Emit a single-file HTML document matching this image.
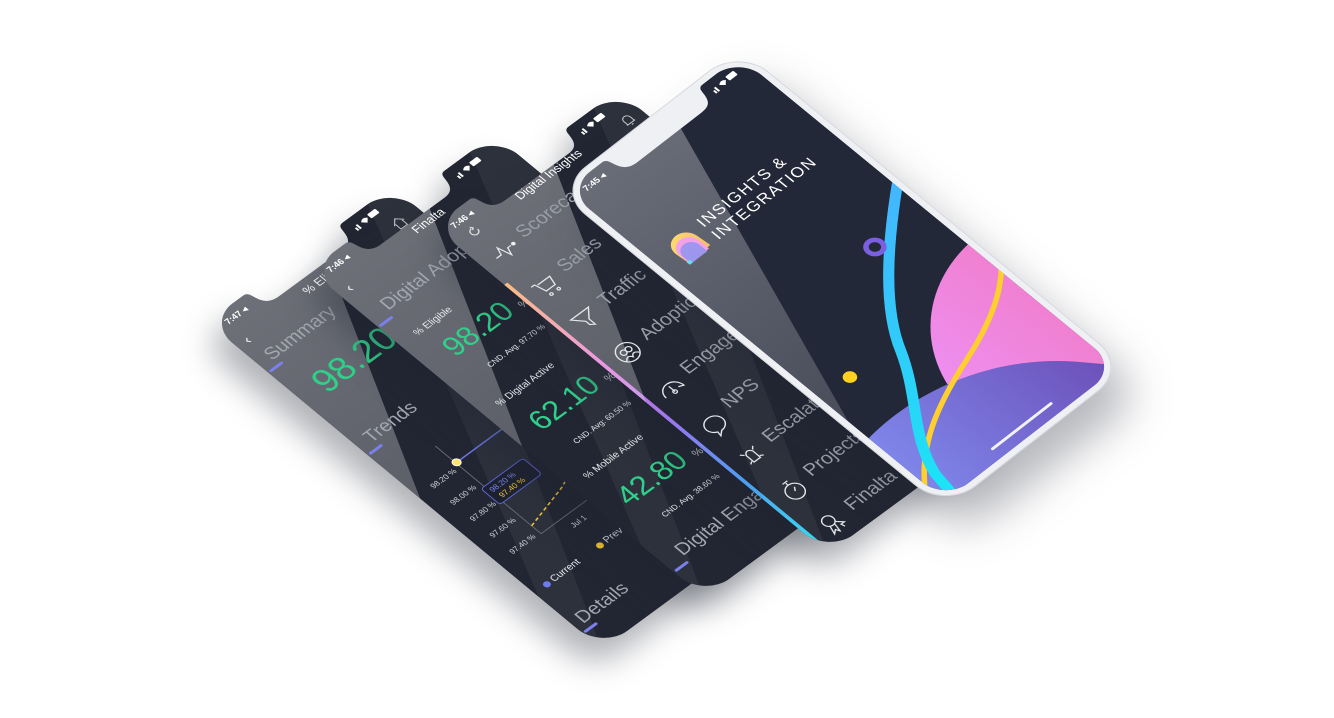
<!DOCTYPE html>
<html><head><meta charset="utf-8">
<style>
html,body{margin:0;padding:0;background:#fff;width:1334px;height:718px;overflow:hidden;font-family:"Liberation Sans",sans-serif}
.sw{position:absolute;left:0;top:0;width:1334px;height:718px}
.ph{position:absolute;left:0;top:0;width:230px;height:500px;transform-origin:0 0;background:#222632;overflow:hidden;
clip-path:path('M 32 0 L 44 0 C 50 0 50 4 51 8 C 53 18 58 22 68 22 L 146 22 C 156 22 160 18 162 8 C 163 4 163 0 169 0 L 198 0 A 32 32 0 0 1 230 32 L 230 468 A 32 32 0 0 1 198 500 L 32 500 A 32 32 0 0 1 0 468 L 0 32 A 32 32 0 0 1 32 0 Z')}
.ph *{position:absolute;white-space:nowrap}
.gl{left:0;top:0;width:230px;height:500px;background:linear-gradient(180deg,rgba(255,255,255,.34),rgba(255,255,255,.2));clip-path:polygon(0 0,140px 0,0 270px)}
.gl2{left:0;top:0;width:230px;height:500px;background:rgba(255,255,255,.05);clip-path:polygon(200px 0,230px 0,230px 60px,0 500px,0 420px)}
.t{color:#fff;font-size:9px;font-weight:bold}
.ti{color:#fff;font-size:12px}
.tab{color:#a3a7b0;font-size:19px}
.ind{width:16px;height:3px;background:#7c80ee;border-radius:2px}
.g{color:#2fd08a;font-weight:normal}
.s{color:#e6e8ec;font-size:9px}
.m{color:#9a9ea8;font-size:19px}
.sig{width:30px;height:10px}
</style></head><body>

<!-- phone 4 -->
<div class="sw" style="filter:drop-shadow(-8px 22px 16px rgba(30,35,50,.35))">
<div class="ph" style="transform:matrix(0.804,-0.59,0.79,0.655,207,322)">
 <div class="gl"></div><div class="gl2"></div>
 <div class="t" style="left:12px;top:7px">7:47 ◂</div>
 <svg class="sig" style="left:172px;top:6px" viewBox="0 0 30 10"><rect x="0" y="6" width="2" height="4" fill="#fff"/><rect x="3" y="4" width="2" height="6" fill="#fff"/><path d="M9 5 Q13 1 17 5 L13 9Z" fill="#fff"/><rect x="19" y="2" width="10" height="6" rx="1" fill="#fff"/></svg>
 <svg style="left:198px;top:26px;width:16px;height:16px" viewBox="0 0 16 16"><path d="M2 8 L8 2 L14 8 M4 7 V14 H12 V7" stroke="#ccc" fill="none"/></svg>
 <div class="ti" style="left:10px;top:30px;font-size:14px">&lsaquo;</div>
 <div class="ti" style="left:88px;top:27px">% Eligible</div>
 <div class="tab" style="left:12px;top:54px">Summary</div>
 <div class="ind" style="left:2px;top:76px"></div>
 <div class="g" style="left:22px;top:97px;font-size:36px">98.20</div>
 <div class="tab" style="left:12px;top:180px">Trends</div>
 <div class="ind" style="left:2px;top:202px"></div>
 <svg style="left:0;top:220px;width:230px;height:170px" viewBox="0 220 230 170">
  <path d="M52 236 V370 H150" stroke="#666a73" fill="none"/>
  <path d="M53 262 H150" stroke="#6f78e8" stroke-width="1.5" fill="none"/>
  <path d="M52 358 L102 345 L140 330" stroke="#f2c531" stroke-width="1.5" stroke-dasharray="4 3" fill="none"/>
  <circle cx="53" cy="262" r="4" fill="#ffe46a" stroke="#fff"/>
  <rect x="48" y="298" width="52" height="24" rx="3" fill="#1e2230" stroke="#5f67d8"/>
  <text x="53" y="308" font-size="8" fill="#8188f0" font-family="Liberation Sans">98.20 %</text>
  <text x="55" y="318" font-size="8" fill="#f5c92c" font-family="Liberation Sans">97.40 %</text>
  <g font-size="8" fill="#cfd2d8" font-family="Liberation Sans" text-anchor="end">
  <text x="46" y="270">98.20 %</text><text x="46" y="295">98.00 %</text><text x="46" y="320">97.80 %</text><text x="46" y="345">97.60 %</text><text x="46" y="370">97.40 %</text></g>
  <text x="78" y="385" font-size="8" fill="#cfd2d8" font-family="Liberation Sans">Jul 1</text>
 </svg>
 <div style="left:12px;top:411px;width:7px;height:7px;border-radius:50%;background:#6f7cf0"></div>
 <div class="s" style="left:22px;top:409px;font-size:10px">Current</div>
 <div style="left:78px;top:411px;width:7px;height:7px;border-radius:50%;background:#f5c92c"></div>
 <div class="s" style="left:88px;top:409px;font-size:10px">Previous</div>
 <div class="tab" style="left:8px;top:452px">Details</div>
 <div class="ind" style="left:2px;top:474px"></div>
</div></div>

<!-- phone 3 -->
<div class="sw" style="filter:drop-shadow(-8px 22px 16px rgba(30,35,50,.35))">
<div class="ph" style="transform:matrix(0.804,-0.59,0.79,0.655,309,270)">
 <div class="gl"></div><div class="gl2"></div>
 <div class="t" style="left:12px;top:7px">7:46 ◂</div>
 <svg class="sig" style="left:172px;top:6px" viewBox="0 0 30 10"><rect x="0" y="6" width="2" height="4" fill="#fff"/><rect x="3" y="4" width="2" height="6" fill="#fff"/><path d="M9 5 Q13 1 17 5 L13 9Z" fill="#fff"/><rect x="19" y="2" width="10" height="6" rx="1" fill="#fff"/></svg>
 <div class="ti" style="left:10px;top:30px;font-size:14px">&lsaquo;</div>
 <div class="ti" style="left:100px;top:24px">Finalta</div>
 <div class="tab" style="left:20px;top:64px">Digital Adoption</div>
 <div class="ind" style="left:2px;top:86px"></div>
 <div class="s" style="left:19px;top:110px;font-size:10px">% Eligible</div>
 <div class="g" style="left:27px;top:132px;font-size:30px">98.20 <span style="position:static;font-size:11px;color:#ddd">%</span></div>
 <div class="s" style="left:42px;top:180px;font-size:8px">CND. Avg. 97.70 %</div>
 <div class="s" style="left:17px;top:216px;font-size:10px">% Digital Active</div>
 <div class="g" style="left:25px;top:243px;font-size:30px">62.10 <span style="position:static;font-size:11px;color:#ddd">%</span></div>
 <div class="s" style="left:38px;top:293px;font-size:8px">CND. Avg: 60.50 %</div>
 <div class="s" style="left:17px;top:327px;font-size:10px">% Mobile Active</div>
 <div class="g" style="left:23px;top:356px;font-size:30px">42.80 <span style="position:static;font-size:11px;color:#ddd">%</span></div>
 <div class="s" style="left:38px;top:405px;font-size:8px">CND. Avg. 38.60 %</div>
 <div class="tab" style="left:19px;top:438px">Digital Engagement</div>
 <div class="ind" style="left:2px;top:460px"></div>
</div></div>

<!-- phone 2 -->
<div class="sw" style="filter:drop-shadow(-8px 22px 16px rgba(30,35,50,.35))">
<div class="ph" style="transform:matrix(0.804,-0.59,0.79,0.655,433,226)">
 <div style="left:0;top:90px;width:4px;height:410px;background:linear-gradient(#f7a04b,#e46fd6 30%,#8b7cf0 55%,#4aa0f0 75%,#27e0f0)"></div>
 <div class="gl"></div><div class="gl2"></div>
 <div class="t" style="left:12px;top:7px">7:46 ◂</div>
 <svg class="sig" style="left:172px;top:6px" viewBox="0 0 30 10"><rect x="0" y="6" width="2" height="4" fill="#fff"/><rect x="3" y="4" width="2" height="6" fill="#fff"/><path d="M9 5 Q13 1 17 5 L13 9Z" fill="#fff"/><rect x="19" y="2" width="10" height="6" rx="1" fill="#fff"/></svg>
 <svg style="left:205px;top:22px;width:16px;height:16px" viewBox="0 0 16 16"><path d="M4 12 V7 A4 4 0 0 1 12 7 V12 H3 H13 M7 14 H9" stroke="#ccc" fill="none"/></svg>
 <svg style="left:16px;top:22px;width:14px;height:14px" viewBox="0 0 14 14"><path d="M11 7 A4 4 0 1 1 7 3 M7 1 L9 3 L7 5" stroke="#ddd" fill="none" stroke-width="1.3"/></svg>
 <div class="ti" style="left:78px;top:20px">Digital Insights</div>
 <div class="m" style="left:50px;top:48px">Scorecard</div>
 <div class="m" style="left:50px;top:100px">Sales</div>
 <div class="m" style="left:50px;top:152px">Traffic</div>
 <div class="m" style="left:50px;top:204px">Adoption</div>
 <div class="m" style="left:50px;top:256px">Engagement</div>
 <div class="m" style="left:50px;top:308px">NPS</div>
 <div class="m" style="left:50px;top:360px">Escalations</div>
 <div class="m" style="left:50px;top:412px">Projects</div>
 <div class="m" style="left:50px;top:464px">Finalta</div>
 <svg style="left:14px;top:50px;width:28px;height:440px" viewBox="0 0 28 440" fill="none" stroke="#e4e6ea" stroke-width="1.3">
  <path d="M2 14 H8 L11 6 L15 20 L18 12 H22"/><circle cx="25" cy="12" r="1.5" fill="#fff"/>
  <path d="M2 58 H6 L9 70 H20 L23 60 H8 M10 74 a1.5 1.5 0 1 0 .1 0 M19 74 a1.5 1.5 0 1 0 .1 0"/>
  <path d="M2 108 H24 L15 118 V126 L11 123 V118 Z"/>
  <circle cx="14" cy="168" r="11"/><circle cx="11" cy="166" r="3"/><circle cx="17" cy="166" r="3"/><path d="M6 175 Q11 169 14 175 Q17 169 22 175"/>
  <path d="M3 228 A11 11 0 1 1 25 228 L20 226 M14 220 L14 228"/><circle cx="14" cy="228" r="2"/>
  <path d="M4 278 A10 9 0 1 1 14 287 L9 291 L10 286 A10 9 0 0 1 4 278"/>
  <path d="M10 322 Q14 316 18 322 L18 332 L10 332 Z M6 318 L9 321 M22 318 L19 321 M6 332 L9 330 M22 332 L19 330"/>
  <circle cx="14" cy="380" r="9"/><path d="M14 371 V368 M11 367 H17 M14 380 L17 376"/>
  <circle cx="12" cy="424" r="6"/><path d="M9 429 L6 438 L10 435 L12 439 L14 430 M16 428 L22 434 L18 434 L19 438"/>
 </svg>
</div></div>

<!-- front phone -->
<div class="sw" style="filter:drop-shadow(18px 26px 22px rgba(30,35,50,.32))">
<div style="position:absolute;left:0;top:0;width:230px;height:500px;transform-origin:0 0;transform:matrix(0.80,-0.62,0.78,0.64,555,190);background:#eef0f3;border-radius:38px;box-shadow:inset 0 0 0 1px #d4d7dc">
 <div class="ph" style="left:7px;top:7px;width:216px;height:486px;background:#232838;clip-path:path('M 30 0 L 44 0 C 50 0 50 4 51 8 C 53 18 58 22 68 22 L 148 22 C 158 22 162 18 164 8 C 165 4 165 0 171 0 L 186 0 A 30 30 0 0 1 216 30 L 216 456 A 30 30 0 0 1 186 486 L 30 486 A 30 30 0 0 1 0 456 L 0 30 A 30 30 0 0 1 30 0 Z')">
  <svg style="left:-7px;top:-7px;width:230px;height:500px" viewBox="0 0 230 500">
   <defs>
    <linearGradient id="pk" x1="0" y1="0" x2="1" y2="0"><stop offset="0" stop-color="#ee8ff2"/><stop offset="1" stop-color="#f26ea8"/></linearGradient>
    <linearGradient id="pu" x1="0" y1="0" x2="1" y2="0"><stop offset="0" stop-color="#7f86ea"/><stop offset="1" stop-color="#6a4cb5"/></linearGradient>
    <linearGradient id="cy" x1="0" y1="0" x2="0" y2="1"><stop offset="0" stop-color="#45b4ff"/><stop offset="1" stop-color="#16e9f4"/></linearGradient>
    <linearGradient id="lg1" x1="0" y1="0" x2="1" y2="1"><stop offset="0" stop-color="#ffd23a"/><stop offset="1" stop-color="#f4a23a"/></linearGradient>
   </defs>
   <circle cx="238" cy="445" r="145" fill="url(#pk)"/>
   <path d="M0 396 C70 384 150 404 200 462 L240 510 L0 510Z" fill="url(#pu)"/>
   <path d="M245 318 C225 345 200 370 131 393 C80 410 30 432 -5 482" stroke="#ffcf2e" stroke-width="5" fill="none"/>
   <path d="M242 195 C170 250 118 300 96 345 C72 392 36 420 22 465 L14 512" stroke="url(#cy)" stroke-width="10" fill="none"/>
   <circle cx="161" cy="245" r="8" fill="none" stroke="#7a5fe0" stroke-width="5"/>
   <circle cx="43" cy="334" r="6.5" fill="#ffd21f"/>
   <g transform="translate(42,132)">
    <path d="M-14 -6 A14 14 0 0 1 14 -6 L14 10 L-14 10Z" fill="url(#lg1)" transform="rotate(-5)"/>
    <path d="M-13 -2 A12 12 0 0 1 11 -2 L11 11 L-13 11Z" fill="#ef7fe0"/>
    <path d="M-12 2 A10 10 0 0 1 8 2 L8 12 L-12 12Z" fill="#7b6fe6"/>
    <rect x="-14" y="8" width="4" height="4" fill="#27d7f0"/>
   </g>
   <text x="66" y="123" font-size="16" letter-spacing="1.5" fill="#fff" font-family="Liberation Sans">INSIGHTS &amp;</text>
   <text x="66" y="142" font-size="16" letter-spacing="1.5" fill="#fff" font-family="Liberation Sans">INTEGRATION</text>
  </svg>
  <div style="left:0;top:0;width:216px;height:486px;background:linear-gradient(180deg,rgba(255,255,255,.32),rgba(255,255,255,.12));clip-path:polygon(0 0,130px 0,0 362px)"></div>
  <div class="t" style="left:12px;top:6px">7:45 ◂</div>
  <svg class="sig" style="left:172px;top:6px" viewBox="0 0 30 10"><rect x="0" y="6" width="2" height="4" fill="#fff"/><rect x="3" y="4" width="2" height="6" fill="#fff"/><path d="M9 5 Q13 1 17 5 L13 9Z" fill="#fff"/><rect x="19" y="2" width="10" height="6" rx="1" fill="#fff"/></svg>
  <div style="left:70px;top:472px;width:76px;height:3px;border-radius:2px;background:#f2f2f6"></div>
 </div>
</div></div>
</body></html>
